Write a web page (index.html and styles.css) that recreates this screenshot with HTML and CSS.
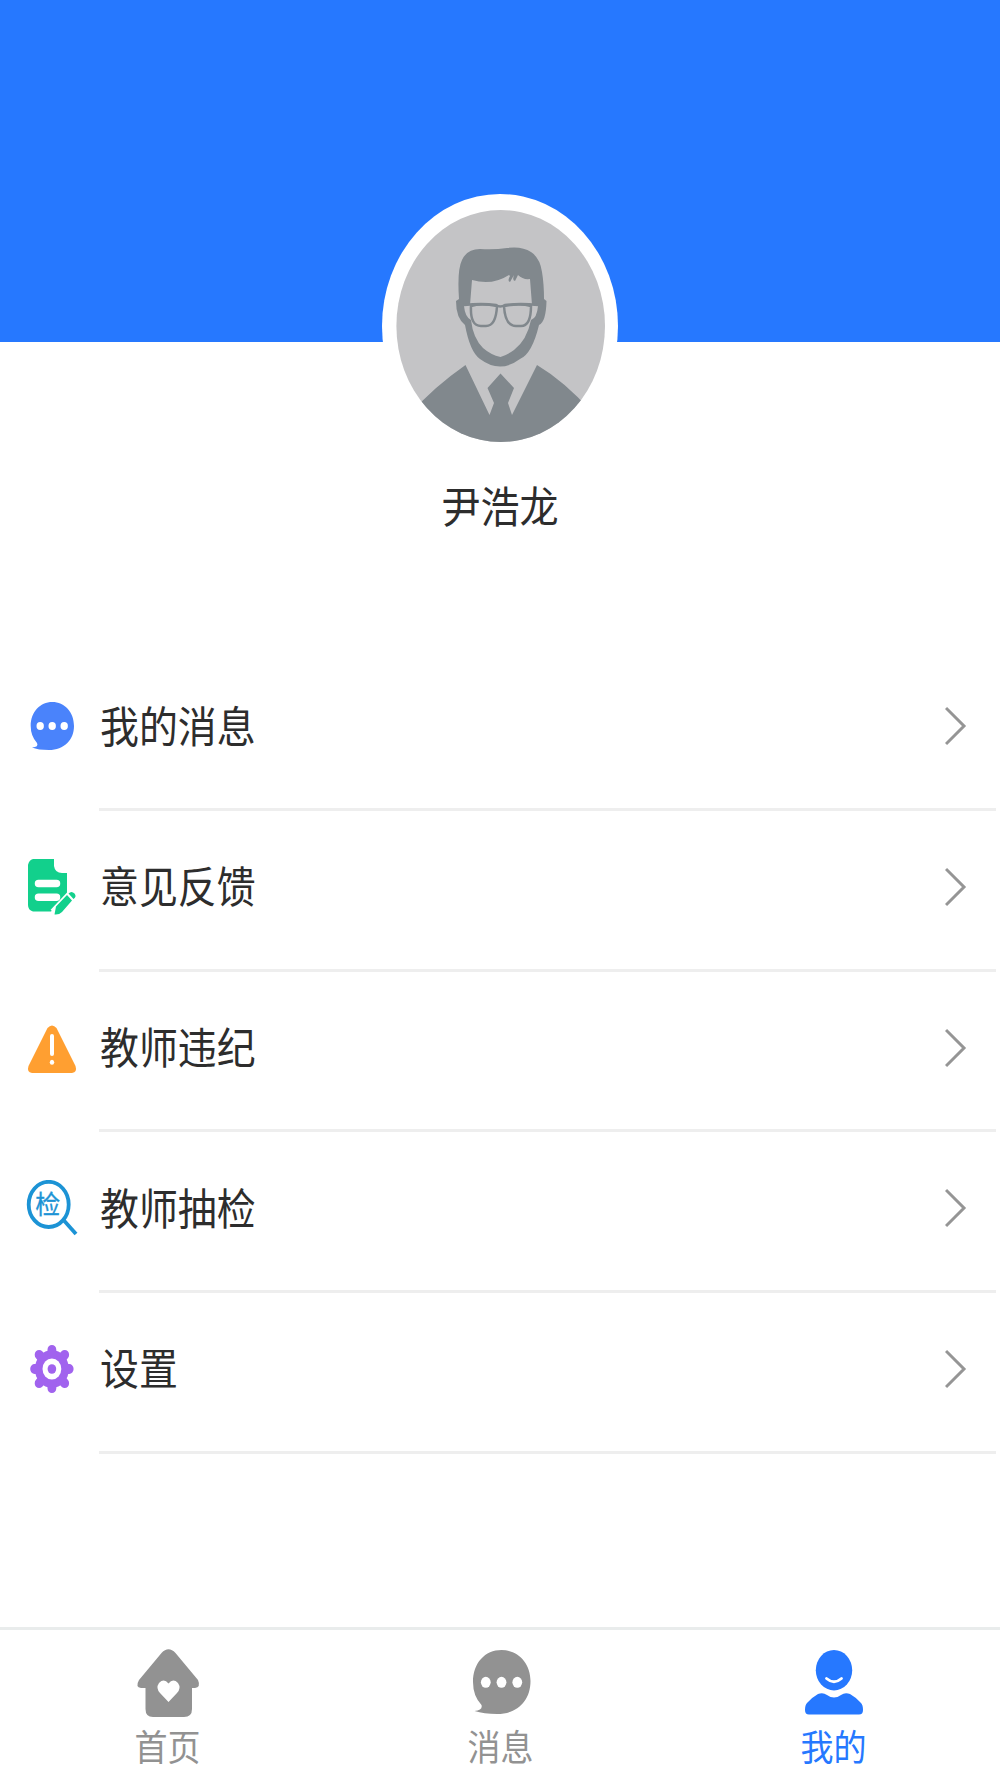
FILE: index.html
```
<!DOCTYPE html>
<html lang="zh-CN">
<head>
    <meta charset="UTF-8">
    <title>我的</title>
    <link rel="stylesheet" href="styles.css">
</head>
<body>
    <div class="profile">
        <svg class="avatar" viewBox="0 0 236 264">
            <defs>
                <clipPath id="face"><ellipse cx="118.700" cy="132" rx="104.300" ry="116"/></clipPath>
            </defs>
            <ellipse cx="118" cy="132" rx="118" ry="132" fill="#fff"/>
            <ellipse cx="118.700" cy="132" rx="104.300" ry="116" fill="#c4c4c6"/>
            <!-- suit and tie -->
            <g clip-path="url(#face)" fill="#81888d">
                <path d="M30 218Q52 193 83.500 171L107.500 221L112 209L105.500 194L118.500 179.500L132 194L126 209L130 221L155 171Q182 187 210 218V264H30Z"/>
            </g>
            <!-- hair and beard -->
            <path fill="#81888d" d="M77 105Q75 76 80 66Q85 55 98 55Q112 56 125 54Q140 52 149 58Q158 64 160 78Q162 90 162 105L164.500 107Q164 128 157 131Q150 160 138 165Q118 180 98 165Q88 158 83 131Q74 124 74 107Z"/>
            <path fill="#c4c4c6" d="M90 86Q110 92 127 81L128 82Q125 87 128 88L132 81Q130 87 133 87L136 81Q141 86 148 85L150 111L156 112Q155 124 149 126Q145 146 132 156Q125 161 118.500 163Q109 161 101 154Q91 144 89 126Q83 123 82 112L88 111Z"/>
            <path fill="#c4c4c6" stroke="#81888d" stroke-width="2.500" d="M89 112Q99 109 115 112Q114 132 104 132H99Q88 132 89 112ZM122 112Q138 109 149 112Q149 132 139 132H134Q123 132 122 112Z"/>
            <path fill="none" stroke="#81888d" stroke-width="2.500" d="M82 111Q100 109 114 111Q118 114 123 111Q138 109 156 111"/>
        </svg>
        <div class="name"><span class="tall">尹浩龙</span></div>
    </div>

    <div class="menu">
        <div class="item">
            <svg class="icon" viewBox="0 0 52 56">
                <path fill="#4a83fb" d="M26.300 4C38.500 4 48 14 48 28C48 42 38 52 23 52Q12 52 6 49.500Q13 49 11 45Q4.700 38 4.700 28C4.700 14 14 4 26.300 4Z"/>
                <g fill="#fff">
                    <ellipse cx="14.200" cy="28" rx="3.700" ry="4.100"/>
                    <ellipse cx="26.200" cy="28" rx="3.700" ry="4.100"/>
                    <ellipse cx="38.200" cy="28" rx="3.700" ry="4.100"/>
                </g>
            </svg>
            <div class="label"><span class="tall">我的消息</span></div>
            <svg class="arrow" viewBox="0 0 22 40"><path d="M1 2L19 20L1 38"/></svg>
        </div>
        <div class="item">
            <svg class="icon" viewBox="0 0 52 56">
                <path fill="#12d08c" d="M7 0H28V7Q29 14 36 14H41V36L25 52.500H7Q2 51 2 46V6Q3 1 7 0Z"/>
                <path stroke="#fff" stroke-width="7.500" stroke-linecap="round" d="M12.500 24.600H30.500M12.500 38.300H30.500"/>
                <path stroke="#fff" stroke-width="12" d="M29 55L48 35"/>
                <path fill="#12d08c" d="M28.500 55.500L30 47.500L41 36L46 41.500L36 53Q33 56 28.500 55.500ZM42.500 34.500Q45.500 31.500 48.500 34.500Q51 37.500 47.500 40Z"/>
            </svg>
            <div class="label"><span class="tall">意见反馈</span></div>
            <svg class="arrow" viewBox="0 0 22 40"><path d="M1 2L19 20L1 38"/></svg>
        </div>
        <div class="item">
            <svg class="icon" viewBox="0 0 52 56">
                <path fill="#ff9f31" d="M21.500 8Q26 3 30.500 8L49.500 46Q51.500 52 46 53H6Q.5 52 2.500 46Z"/>
                <path stroke="#fff" stroke-width="4" stroke-linecap="round" d="M26 16V34"/>
                <ellipse cx="26" cy="42.300" rx="2.200" ry="2.500" fill="#fff"/>
            </svg>
            <div class="label"><span class="tall">教师违纪</span></div>
            <svg class="arrow" viewBox="0 0 22 40"><path d="M1 2L19 20L1 38"/></svg>
        </div>
        <div class="item">
            <svg class="icon" viewBox="0 0 52 56">
                <g fill="none" stroke="#1c93d5" stroke-width="3.800">
                    <ellipse cx="22.700" cy="24.400" rx="20" ry="22.600"/>
                    <path d="M37.500 40L50 54"/>
                </g>
                <text class="check" transform="translate(9.300 34) scale(1 1.060)">检</text>
            </svg>
            <div class="label"><span class="tall">教师抽检</span></div>
            <svg class="arrow" viewBox="0 0 22 40"><path d="M1 2L19 20L1 38"/></svg>
        </div>
        <div class="item">
            <svg class="icon" viewBox="0 0 52 56">
                <g transform="translate(25.900 28) scale(1 1.110)">
                    <circle r="17" fill="#a163ee"/>
                    <path stroke="#a163ee" stroke-width="8.800" stroke-linecap="round" d="M0 -17.300V17.300M-17.300 0H17.300M-12.800 -12.800L12.800 12.800M12.800 -12.800L-12.800 12.800"/>
                    <circle r="9.400" fill="#fff"/>
                    <circle r="4.300" fill="#a163ee"/>
                </g>
            </svg>
            <div class="label"><span class="tall">设置</span></div>
            <svg class="arrow" viewBox="0 0 22 40"><path d="M1 2L19 20L1 38"/></svg>
        </div>
    </div>

    <div class="tabbar">
        <div class="tab">
            <svg class="tab-icon" viewBox="0 0 66 75">
                <path fill="currentColor" d="M26.500 8Q33.500 .5 40.500 8L63 35Q66 42 60 43H57V64Q57 72 49 72H18Q10.500 72 10.500 64V43H6Q0 42 4 35Z"/>
                <path fill="#fff" d="M33.500 57L25 48Q20.500 43 24 38Q29 33 33.500 38.500Q38 33 43 38Q46.500 43 42 48Z"/>
            </svg>
            <span class="tall">首页</span>
        </div>
        <div class="tab">
            <svg class="tab-icon" viewBox="0 0 66 75">
                <path fill="currentColor" d="M33.500 5C50 5 62.500 18 62.500 36C62.500 56 49 69 29 69Q16 69 6.500 66Q15 65 13.500 60Q5 51 5 37C5 18 17 5 33.500 5Z"/>
                <g fill="#fff">
                    <ellipse cx="17.800" cy="37.300" rx="4.900" ry="5.500"/>
                    <ellipse cx="33.500" cy="37.300" rx="4.900" ry="5.500"/>
                    <ellipse cx="49.300" cy="37.300" rx="4.900" ry="5.500"/>
                </g>
            </svg>
            <span class="tall">消息</span>
        </div>
        <div class="tab active">
            <svg class="tab-icon" viewBox="0 0 66 75">
                <g fill="currentColor">
                    <ellipse cx="33" cy="25.200" rx="18.200" ry="20.200"/>
                    <path d="M17 49Q22 47 26 50Q33 55 40 50Q44 47 49 49Q56 53 60 58Q62 60 62 65Q62 69.500 58 69.500H8Q4 69.500 4 65Q4 60 6 58Q10 53 17 49Z"/>
                </g>
                <path fill="none" stroke="#fff" stroke-width="2.800" stroke-linecap="round" d="M25.500 33.500Q33 40 40.500 33.500"/>
            </svg>
            <span class="tall">我的</span>
        </div>
    </div>
</body>
</html>
```
FILE: styles.css
```
* {
    box-sizing: border-box;
}
body {
    margin: 0;
    height: 1778px;
    display: flex;
    flex-direction: column;
    background: #fff;
    color: #2d2d2d;
    font-family: "Noto Sans CJK SC", sans-serif;
    overflow: hidden;
}
svg {
    display: block;
    flex-shrink: 0;
}
/* the whole screen is stretched a little in height */
.tall {
    display: block;
    transform: scaleY(1.11);
}
.profile {
    height: 650.6px;
    padding-top: 194px;
    display: flex;
    flex-direction: column;
    align-items: center;
    background: linear-gradient(#2678ff 342px, #fff 342px);
}
.avatar {
    width: 236px;
    height: 264px;
}
.name {
    margin-top: 17px;
    font-size: 39px;
    line-height: 58px;
}
.menu {
    flex: 1;
}
.item {
    height: 160.6px;
    padding-left: 26px;
    padding-right: 33px;
    padding-bottom: 9px;
    display: flex;
    align-items: center;
    background: linear-gradient(#eee, #eee) 99px 100% / 897px 3px no-repeat;
}
.icon {
    width: 52px;
    height: 56px;
}
.label {
    flex: 1;
    margin-left: 22px;
    margin-bottom: 5px;
    font-size: 38.9px;
    line-height: 58px;
}
.arrow {
    width: 22px;
    height: 40px;
}
.arrow path {
    fill: none;
    stroke: #959595;
    stroke-width: 3px;
}
.check {
    font-size: 25px;
    fill: #1c93d5;
    stroke: #1c93d5;
    stroke-width: 0.3px;
}
.tabbar {
    height: 151px;
    padding-top: 15px;
    padding-left: 1px;
    display: flex;
    justify-content: space-between;
    border-top: 3px solid #e9ecec;
    color: #929292;
}
.tab {
    width: 334px;
    display: flex;
    flex-direction: column;
    align-items: center;
    font-size: 33px;
    line-height: 48px;
}
.tab-icon {
    width: 66px;
    height: 75px;
    margin-bottom: 1px;
}
.active {
    color: #2678ff;
}
```
